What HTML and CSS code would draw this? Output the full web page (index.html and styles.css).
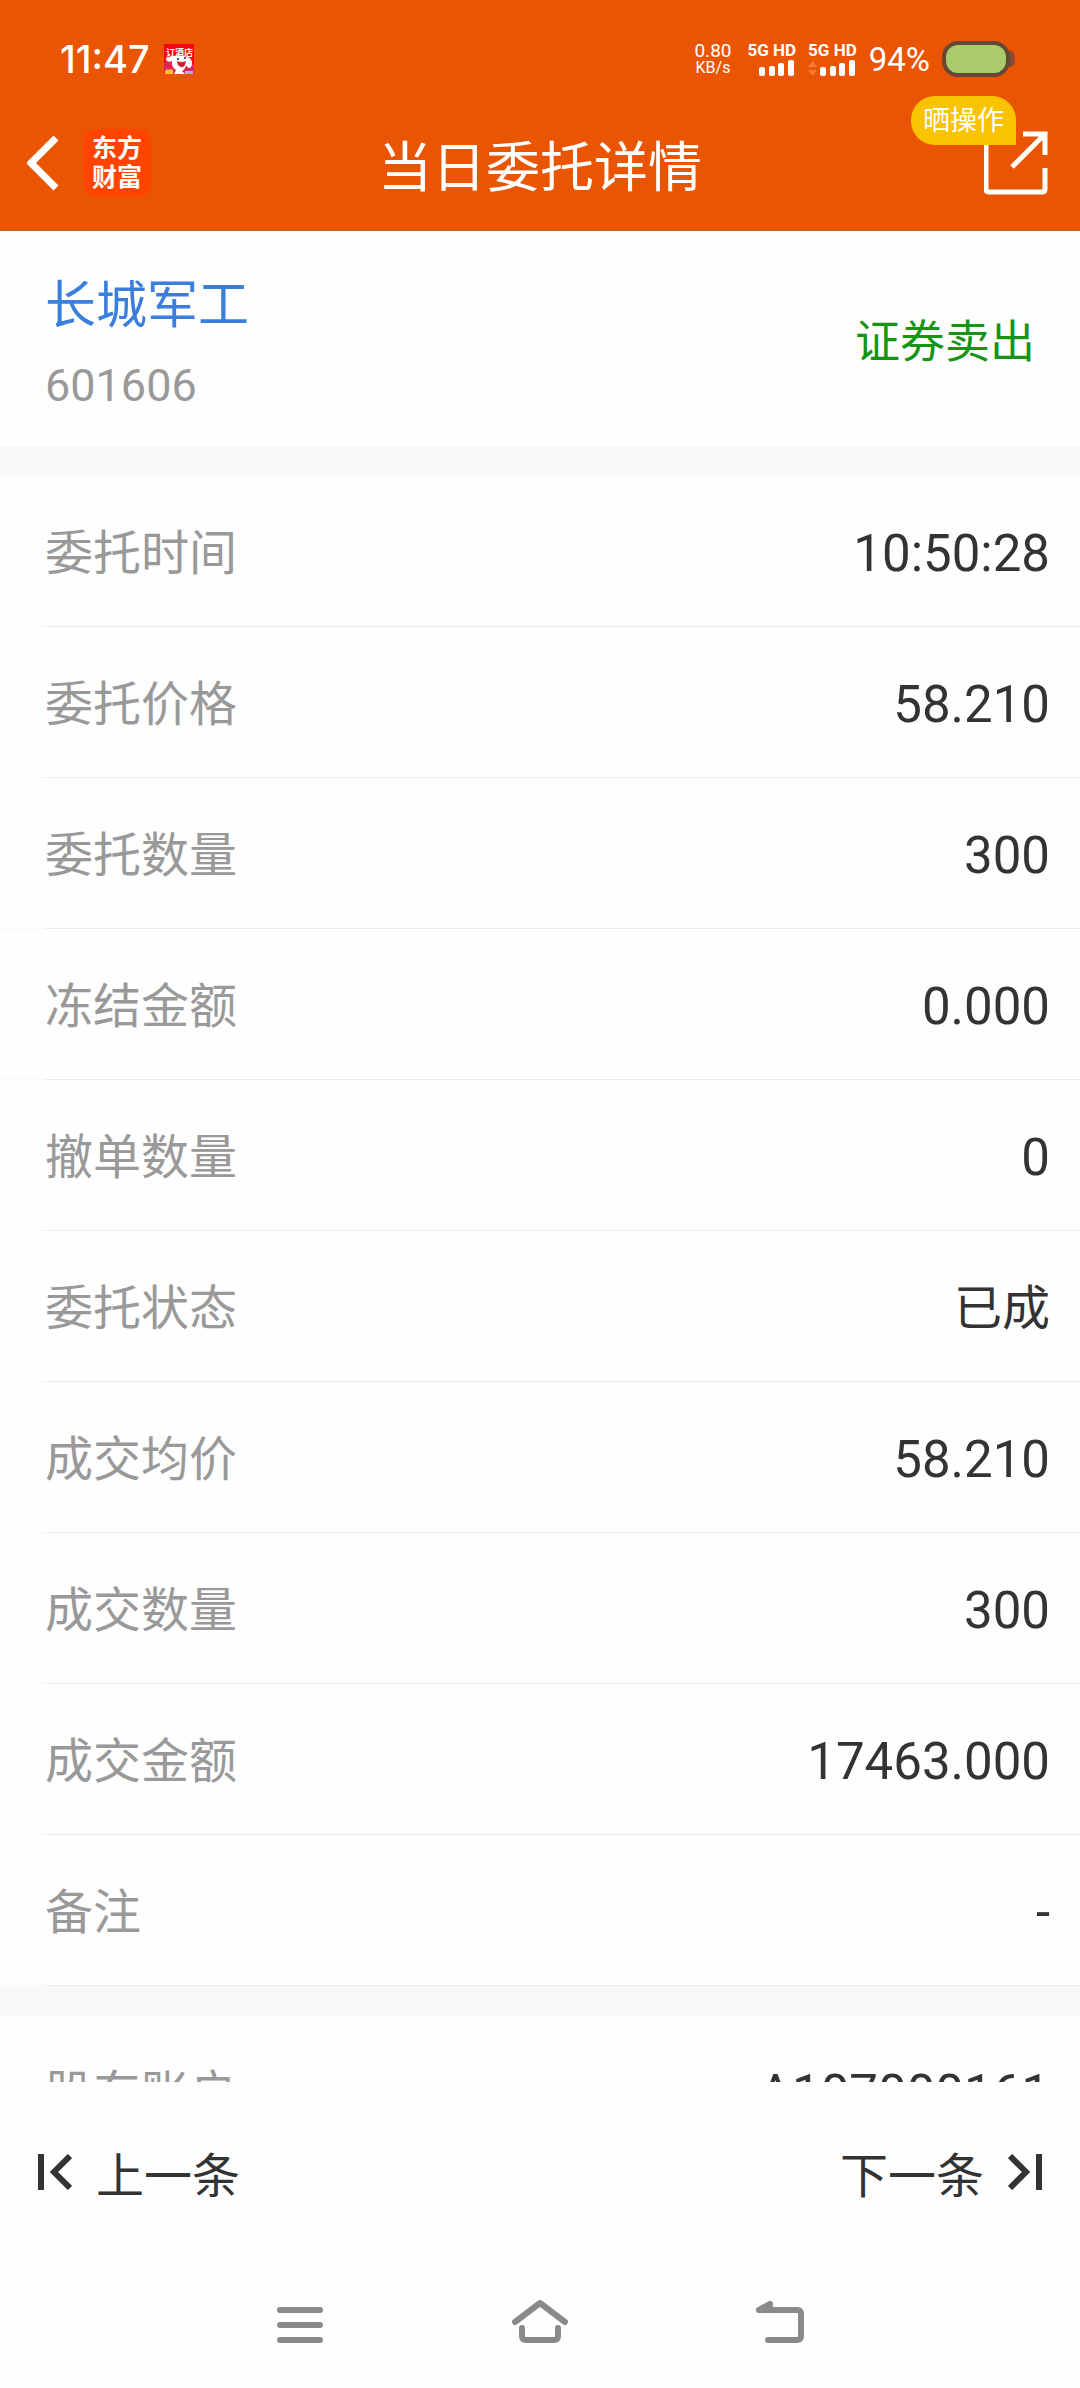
FILE: index.html
```html
<!DOCTYPE html>
<html lang="zh-CN">
<head>
  <meta charset="UTF-8" />
  <meta name="viewport" content="width=device-width, initial-scale=1.0" />
  <title>当日委托详情</title>
  <link rel="stylesheet" href="styles.css">
</head>
<body>
  <header class="header">
    <div class="status-bar">
      <div class="status-left">
        <span class="clock">11:47</span>
        <svg class="notice-icon" viewBox="0 0 30 30">
          <rect width="30" height="30" rx="1" fill="#f5060f"/>
          <path d="M0 30V19l5-3 20 1 5 4v9z" fill="#e8205a"/>
          <path d="M2 16q-1-3 3-3 3-1 5-1 6-2 12 1 5 0 6 5 0 6-3 6-2 0-3-3-1 5-4 6l3 3H10l2-4q-5-3-4-9-4 2-6-1z" fill="#fff"/>
          <path d="M1 27q2-3 4-1 2-2 4 0v4H1z" fill="#ffc32b"/>
          <path d="M21 30v-3h8v3z" fill="#b9a4f5"/>
          <path d="M13 17q5 2 9 0-1 7-5 6-4-1-4-6z" fill="#d5202c"/>
          <circle cx="14" cy="15" r="1" fill="#222"/>
          <circle cx="21" cy="14" r="1" fill="#222"/>
          <text class="notice-text" x="2" y="12">订酒店</text>
        </svg>
      </div>
      <div class="status-right">
        <div class="net-speed">
          <span class="net-value">0.80</span>
          <span class="net-unit">KB/s</span>
        </div>
        <div class="signal">
          <span class="signal-type">5G HD</span>
          <svg class="signal-bars" viewBox="0 0 48 16">
            <g fill="#fff">
              <rect x="12" y="7" width="6" height="9" rx="2"/>
              <rect x="22" y="6" width="6" height="10" rx="2"/>
              <rect x="31" y="3" width="6" height="13" rx="2"/>
              <rect x="41" y="0" width="6" height="16" rx="2"/>
            </g>
          </svg>
        </div>
        <div class="signal">
          <span class="signal-type">5G HD</span>
          <svg class="signal-bars" viewBox="0 0 48 16">
            <path d="M0 7l4.500-6L9 7zM0 10h9l-4.500 6z" fill="#f27b3a"/>
            <g fill="#fff">
              <rect x="12" y="7" width="6" height="9" rx="2"/>
              <rect x="22" y="6" width="6" height="10" rx="2"/>
              <rect x="31" y="3" width="6" height="13" rx="2"/>
              <rect x="41" y="0" width="6" height="16" rx="2"/>
            </g>
          </svg>
        </div>
        <span class="battery-text">94%</span>
        <svg class="battery" viewBox="0 0 74 36">
          <path d="M67 9q6 1 6 9t-6 8z" fill="#8a4a34"/>
          <rect x="2" y="2" width="64" height="32" rx="14" fill="#aacb6a" stroke="#654736" stroke-width="4"/>
        </svg>
      </div>
    </div>
    <div class="title-bar">
      <button class="icon-btn" aria-label="返回">
        <svg class="back-icon" viewBox="0 0 32 56">
          <path d="M29 3L4 28l25 25" fill="none" stroke="#fff" stroke-width="7"/>
        </svg>
      </button>
      <div class="brand"><span>东方</span><span>财富</span></div>
      <h1 class="title">当日委托详情</h1>
      <button class="icon-btn share" aria-label="分享">
        <svg class="share-icon" viewBox="0 0 64 64">
          <path d="M2 10v48q0 3 3 3h53q3 0 3-3V37M39 3h22v21M60 4L28 36" fill="none" stroke="#fff" stroke-width="5"/>
        </svg>
        <span class="share-tag">晒操作</span>
      </button>
    </div>
  </header>

  <main class="content">
    <section class="stock">
      <div>
        <a href="#" class="stock-name">长城军工</a>
        <div class="stock-code">601606</div>
      </div>
      <div class="trade-type">证券卖出</div>
    </section>
    <dl class="details">
      <div class="row"><dt>委托时间</dt><dd>10:50:28</dd></div>
      <div class="row"><dt>委托价格</dt><dd>58.210</dd></div>
      <div class="row"><dt>委托数量</dt><dd>300</dd></div>
      <div class="row"><dt>冻结金额</dt><dd>0.000</dd></div>
      <div class="row"><dt>撤单数量</dt><dd>0</dd></div>
      <div class="row"><dt>委托状态</dt><dd class="status-text">已成</dd></div>
      <div class="row"><dt>成交均价</dt><dd>58.210</dd></div>
      <div class="row"><dt>成交数量</dt><dd>300</dd></div>
      <div class="row"><dt>成交金额</dt><dd>17463.000</dd></div>
      <div class="row"><dt>备注</dt><dd>-</dd></div>
    </dl>
    <dl class="details">
      <div class="row"><dt>股东账户</dt><dd>A107000161</dd></div>
    </dl>
  </main>

  <footer class="pager">
    <button class="pager-btn">
      <svg class="pager-icon" viewBox="0 0 34 36">
        <path d="M3 0v36M32 2L16 18l16 16" fill="none" stroke="#333" stroke-width="6"/>
      </svg>
      上一条
    </button>
    <button class="pager-btn">
      下一条
      <svg class="pager-icon" viewBox="0 0 34 36">
        <path d="M31 0v36M2 2l16 16L2 34" fill="none" stroke="#333" stroke-width="6"/>
      </svg>
    </button>
  </footer>

  <nav class="system-nav">
    <button class="nav-btn" aria-label="菜单">
      <svg class="nav-icon" viewBox="0 0 60 50">
        <path d="M10 10h40M10 25h40M10 40h40"/>
      </svg>
    </button>
    <button class="nav-btn" aria-label="主页">
      <svg class="nav-icon" viewBox="0 0 60 50">
        <path d="M5 22L30 3l25 19M12 28v8q0 4 4 4h28q4 0 4-4v-8"/>
      </svg>
    </button>
    <button class="nav-btn" aria-label="返回">
      <svg class="nav-icon" viewBox="0 0 60 50">
        <path d="M20 4L9 10h38q4 0 4 4v22q0 4-4 4H18M9 10l11-3"/>
      </svg>
    </button>
  </nav>
</body>
</html>
```

FILE: styles.css
```css
* {
  box-sizing: border-box;
}
body {
  margin: 0;
  height: 100vh;
  display: flex;
  flex-direction: column;
  background: #fefefe;
  color: #333;
  font-family: Roboto, "Noto Sans CJK SC", sans-serif;
}
button {
  border: none;
  background: none;
  padding: 0;
  font-family: inherit;
  color: inherit;
  cursor: pointer;
}
svg {
  display: block;
}

/* header */
.header {
  background: #ea5504;
  border-bottom: 1px solid #c4602a;
  color: #fff;
}
.status-bar {
  display: flex;
  justify-content: space-between;
  align-items: center;
  height: 96px;
  padding: 22px 64px 0 60px;
}
.status-left {
  display: flex;
  align-items: center;
  gap: 14px;
}
.clock {
  font-family: Inter, sans-serif;
  font-size: 38px;
  font-weight: 500;
}
.notice-icon {
  width: 30px;
  height: 30px;
}
.notice-text {
  font-size: 9px;
  font-weight: bold;
  fill: #fff;
}
.status-right {
  display: flex;
  align-items: center;
  gap: 12px;
}
.net-speed {
  display: flex;
  flex-direction: column;
  align-items: center;
  margin-right: 4px;
  line-height: 17px;
}
.net-value {
  font-size: 19px;
}
.net-unit {
  font-size: 16px;
}
.signal {
  display: flex;
  flex-direction: column;
  gap: 2px;
}
.signal-type {
  font-size: 17px;
  font-weight: bold;
  line-height: 16px;
}
.signal-bars {
  width: 48px;
  height: 16px;
}
.battery-text {
  font-size: 33px;
}
.battery {
  width: 74px;
  height: 36px;
}
.title-bar {
  position: relative;
  display: flex;
  align-items: center;
  height: 134px;
  padding: 0 32px 0 27px;
}
.back-icon {
  width: 32px;
  height: 56px;
}
.brand {
  display: flex;
  flex-direction: column;
  justify-content: center;
  align-items: center;
  width: 68px;
  height: 68px;
  margin-left: 24px;
  border-radius: 14px;
  background: #ff4400;
  font-size: 25px;
  font-weight: bold;
  line-height: 29px;
}
.title {
  position: absolute;
  left: 0;
  right: 0;
  margin: 0;
  font-size: 54px;
  font-weight: normal;
  text-align: center;
  pointer-events: none;
}
.share {
  position: relative;
  margin-left: auto;
}
.share-icon {
  width: 64px;
  height: 64px;
}
.share-tag {
  position: absolute;
  right: 32px;
  top: -35px;
  padding: 2px 12px 0;
  border-radius: 24px 24px 0 24px;
  background: #f9c300;
  font-size: 27px;
  line-height: 47px;
  white-space: nowrap;
}

/* order */
.content {
  flex: 1;
  min-height: 0;
  overflow: hidden;
}
.stock {
  display: flex;
  justify-content: space-between;
  align-items: center;
  height: 215px;
  padding: 0 45px;
}
.stock-name {
  display: block;
  padding-top: 14px;
  color: #3a7fdc;
  font-size: 51px;
  line-height: 80px;
  text-decoration: none;
}
.stock-code {
  color: #999;
  font-size: 45px;
  line-height: 80px;
}
.trade-type {
  color: #149614;
  font-size: 45px;
}
.details {
  margin: 0;
  border-top: 30px solid #f7f8fa;
}
.row {
  display: flex;
  justify-content: space-between;
  align-items: center;
  height: 151px;
  padding: 0 30px 0 45px;
  /* divider is lighter in the left inset */
  background: linear-gradient(to right, #f7f8fa 45px, #ebebeb 45px) bottom / 100% 1px no-repeat;
}
.row dt {
  padding-bottom: 6px;
  color: #999;
  font-size: 48px;
}
.row dd {
  margin: 0;
  padding-top: 4px;
  font-size: 51px;
}
.row .status-text {
  padding: 0 0 6px;
  font-size: 48px;
}

/* prev / next */
.pager {
  display: flex;
  justify-content: space-between;
  align-items: center;
  height: 180px;
  padding: 0 38px;
}
.pager-btn {
  display: flex;
  align-items: center;
  gap: 24px;
  font-size: 48px;
}
.pager-icon {
  width: 34px;
  height: 36px;
}

/* system buttons */
.system-nav {
  display: flex;
  justify-content: center;
  align-items: center;
  gap: 180px;
  height: 126px;
}
.nav-icon {
  width: 60px;
  height: 50px;
  fill: none;
  stroke: #8a8a8a;
  stroke-width: 6;
  stroke-linecap: round;
  stroke-linejoin: round;
}
```
